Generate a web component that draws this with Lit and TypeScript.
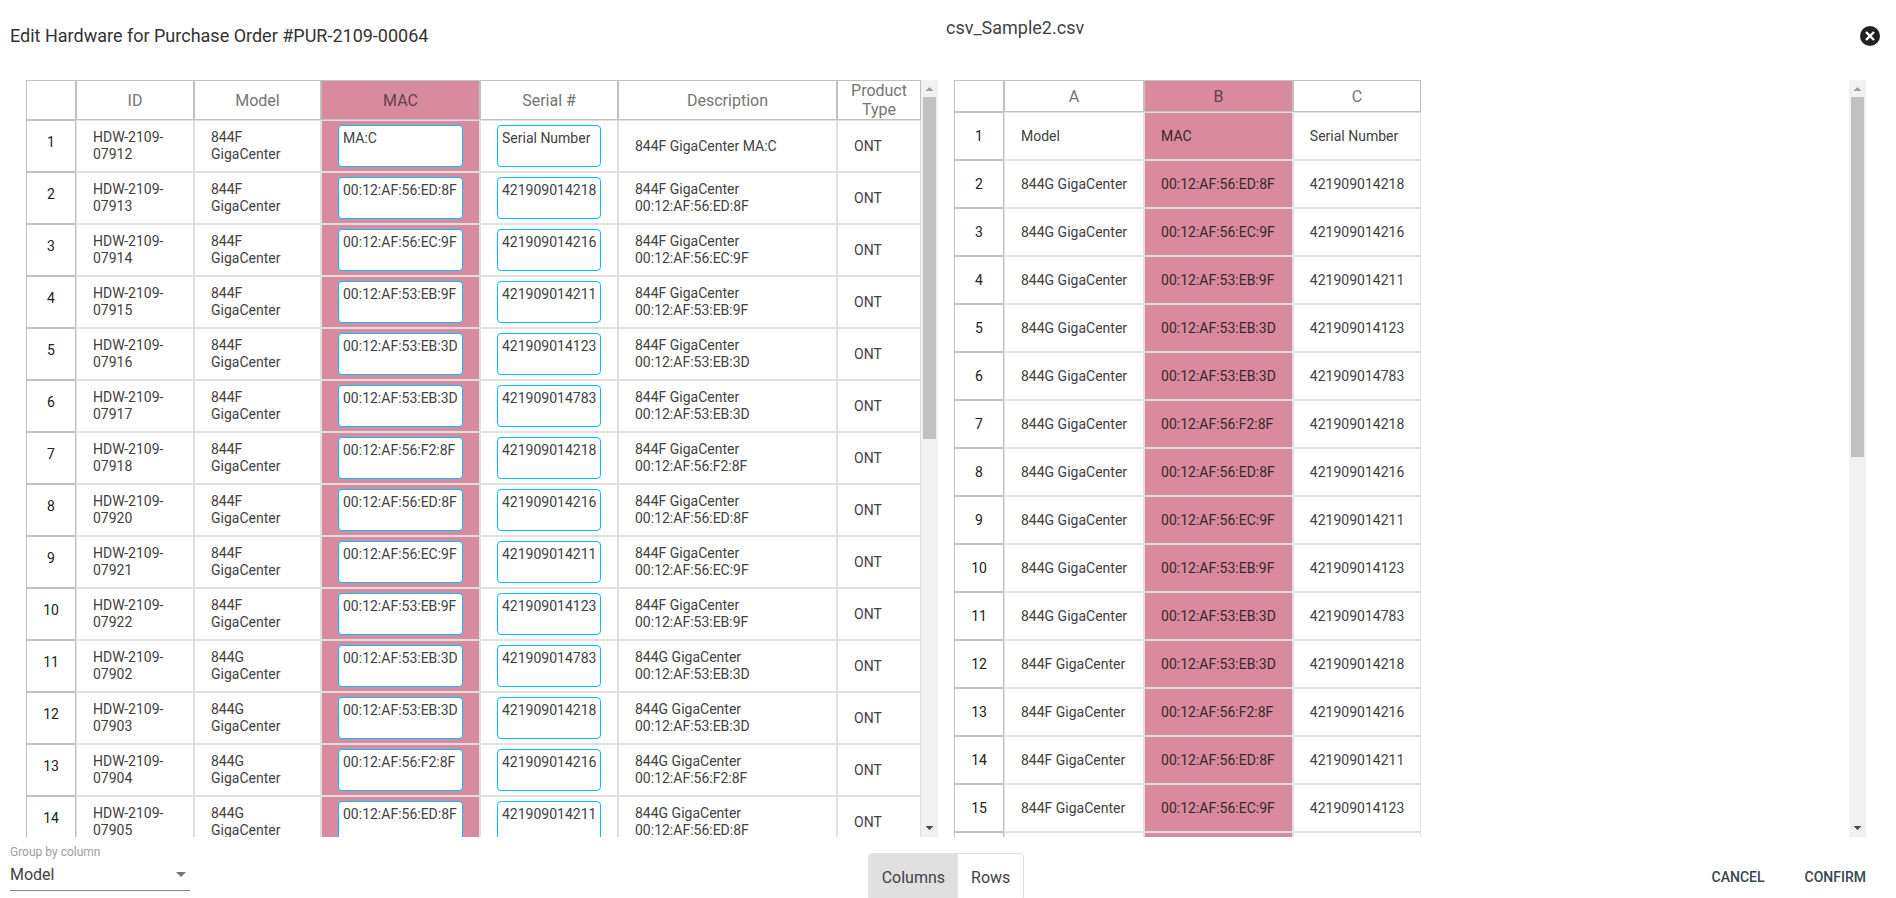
import { LitElement, html, css } from "lit";
import { customElement, property, state } from "lit/decorators.js";
import { classMap } from "lit/directives/class-map.js";

interface HardwareRow {
  id: string;
  model: string;
  mac: string;
  serial: string;
}

const HARDWARE: HardwareRow[] = [
  { id: "HDW-2109-07912", model: "844F GigaCenter", mac: "MA:C", serial: "Serial Number" },
  { id: "HDW-2109-07913", model: "844F GigaCenter", mac: "00:12:AF:56:ED:8F", serial: "421909014218" },
  { id: "HDW-2109-07914", model: "844F GigaCenter", mac: "00:12:AF:56:EC:9F", serial: "421909014216" },
  { id: "HDW-2109-07915", model: "844F GigaCenter", mac: "00:12:AF:53:EB:9F", serial: "421909014211" },
  { id: "HDW-2109-07916", model: "844F GigaCenter", mac: "00:12:AF:53:EB:3D", serial: "421909014123" },
  { id: "HDW-2109-07917", model: "844F GigaCenter", mac: "00:12:AF:53:EB:3D", serial: "421909014783" },
  { id: "HDW-2109-07918", model: "844F GigaCenter", mac: "00:12:AF:56:F2:8F", serial: "421909014218" },
  { id: "HDW-2109-07920", model: "844F GigaCenter", mac: "00:12:AF:56:ED:8F", serial: "421909014216" },
  { id: "HDW-2109-07921", model: "844F GigaCenter", mac: "00:12:AF:56:EC:9F", serial: "421909014211" },
  { id: "HDW-2109-07922", model: "844F GigaCenter", mac: "00:12:AF:53:EB:9F", serial: "421909014123" },
  { id: "HDW-2109-07902", model: "844G GigaCenter", mac: "00:12:AF:53:EB:3D", serial: "421909014783" },
  { id: "HDW-2109-07903", model: "844G GigaCenter", mac: "00:12:AF:53:EB:3D", serial: "421909014218" },
  { id: "HDW-2109-07904", model: "844G GigaCenter", mac: "00:12:AF:56:F2:8F", serial: "421909014216" },
  { id: "HDW-2109-07905", model: "844G GigaCenter", mac: "00:12:AF:56:ED:8F", serial: "421909014211" },
];

const CSV_ROWS: string[][] = [
  ["Model", "MAC", "Serial Number"],
  ["844G GigaCenter", "00:12:AF:56:ED:8F", "421909014218"],
  ["844G GigaCenter", "00:12:AF:56:EC:9F", "421909014216"],
  ["844G GigaCenter", "00:12:AF:53:EB:9F", "421909014211"],
  ["844G GigaCenter", "00:12:AF:53:EB:3D", "421909014123"],
  ["844G GigaCenter", "00:12:AF:53:EB:3D", "421909014783"],
  ["844G GigaCenter", "00:12:AF:56:F2:8F", "421909014218"],
  ["844G GigaCenter", "00:12:AF:56:ED:8F", "421909014216"],
  ["844G GigaCenter", "00:12:AF:56:EC:9F", "421909014211"],
  ["844G GigaCenter", "00:12:AF:53:EB:9F", "421909014123"],
  ["844G GigaCenter", "00:12:AF:53:EB:3D", "421909014783"],
  ["844F GigaCenter", "00:12:AF:53:EB:3D", "421909014218"],
  ["844F GigaCenter", "00:12:AF:56:F2:8F", "421909014216"],
  ["844F GigaCenter", "00:12:AF:56:ED:8F", "421909014211"],
  ["844F GigaCenter", "00:12:AF:56:EC:9F", "421909014123"],
  ["844F GigaCenter", "00:12:AF:53:EB:9F", "421909014783"],
];

const tableStyles = css`
  table {
    border-collapse: separate;
    border-spacing: 0;
    color: #424242;
    font-size: 14px;
    line-height: 17px;
  }
  th,
  td {
    box-sizing: border-box;
    border: 1px solid #e0e0e0;
    padding: 0 16px;
    text-align: left;
    font-weight: 400;
  }
  thead th {
    border-color: #c0c0c0;
    padding: 0;
    color: #757575;
    font-size: 16px;
    line-height: 19px;
    text-align: center;
  }
  .num {
    border-color: #c0c0c0;
    padding: 0;
    color: #212121;
    text-align: center;
  }
  .picked {
    background: #d88b9f;
  }
  thead .picked {
    color: #65414a;
  }
  td.picked {
    color: #3b262b;
  }
`;

/* A pane whose track and thumb are always shown beside the content. */
@customElement("scroll-pane")
export class ScrollPane extends LitElement {
  @property({ type: Number }) thumb = 50;

  static styles = css`
    :host {
      display: flex;
      min-width: 0;
      min-height: 0;
    }
    .content {
      flex: 1;
      min-width: 0;
      overflow: auto;
      scrollbar-width: none;
    }
    .bar {
      display: flex;
      flex-direction: column;
      width: 17px;
      background: #f1f1f1;
    }
    .arrow {
      display: block;
      flex: none;
      width: 17px;
      height: 17px;
    }
    .track {
      flex: 1;
      padding: 0 2px;
    }
    .thumb {
      background: #c1c1c1;
    }
  `;

  render() {
    return html`
      <div class="content"><slot></slot></div>
      <div class="bar" aria-hidden="true">
        <svg class="arrow" viewBox="0 0 17 17" shape-rendering="crispEdges">
          <path d="M8 7h1v1h1v1h1v1h1v1H5v-1h1V9h1V8h1z" fill="#a3a3a3" />
        </svg>
        <div class="track"><div class="thumb" style="height:${this.thumb}%"></div></div>
        <svg class="arrow" viewBox="0 0 17 17" shape-rendering="crispEdges">
          <path d="M5 6h7v1h-1v1h-1v1H9v1H8V9H7V8H6V7H5z" fill="#505050" />
        </svg>
      </div>
    `;
  }
}

@customElement("hardware-table")
export class HardwareTable extends LitElement {
  static styles = [
    tableStyles,
    css`
      :host {
        display: block;
      }
      table {
        width: 100%;
        table-layout: fixed;
      }
      thead tr {
        height: 40px;
      }
      tbody tr {
        height: 52px;
      }
      .c-num { width: 50px; }
      .c-id { width: 118px; }
      .c-model { width: 127px; }
      .c-mac { width: 159px; }
      .c-serial { width: 138px; }
      .c-type { width: 84px; }
      .num {
        padding-bottom: 8px;
      }
      textarea {
        box-sizing: border-box;
        display: block;
        width: 100%;
        height: 42px;
        margin: 0;
        padding: 4px;
        border: 1px solid #00bfff;
        border-radius: 4px;
        outline: none;
        background: #fff;
        color: #424242;
        font: inherit;
        resize: none;
        overflow: hidden;
        white-space: nowrap;
      }
    `,
  ];

  render() {
    return html`
      <table>
        <colgroup>
          <col class="c-num" /><col class="c-id" /><col class="c-model" /><col class="c-mac" />
          <col class="c-serial" /><col /><col class="c-type" />
        </colgroup>
        <thead>
          <tr>
            <th></th>
            <th scope="col">ID</th>
            <th scope="col">Model</th>
            <th scope="col" class="picked">MAC</th>
            <th scope="col">Serial #</th>
            <th scope="col">Description</th>
            <th scope="col">Product Type</th>
          </tr>
        </thead>
        <tbody>
          ${HARDWARE.map(
            (row, i) => html`
              <tr>
                <th scope="row" class="num">${i + 1}</th>
                <td>${row.id}</td>
                <td>${row.model}</td>
                <td class="picked">
                  <textarea aria-label="MAC, row ${i + 1}" spellcheck="false" .value=${row.mac}></textarea>
                </td>
                <td>
                  <textarea aria-label="Serial number, row ${i + 1}" spellcheck="false" .value=${row.serial}></textarea>
                </td>
                <td>${row.model} ${row.mac}</td>
                <td>ONT</td>
              </tr>
            `
          )}
        </tbody>
      </table>
    `;
  }
}

@customElement("csv-table")
export class CsvTable extends LitElement {
  static styles = [
    tableStyles,
    css`
      :host {
        display: block;
      }
      thead tr {
        height: 32px;
      }
      tbody tr {
        height: 48px;
      }
      .num {
        width: 50px;
      }
      td {
        white-space: nowrap;
      }
    `,
  ];

  render() {
    return html`
      <table>
        <thead>
          <tr>
            <th class="num"></th>
            ${["A", "B", "C"].map(
              (name, i) => html`<th scope="col" class=${classMap({ picked: i === 1 })}>${name}</th>`
            )}
          </tr>
        </thead>
        <tbody>
          ${CSV_ROWS.map(
            (row, r) => html`
              <tr>
                <th scope="row" class="num">${r + 1}</th>
                ${row.map((text, i) => html`<td class=${classMap({ picked: i === 1 })}>${text}</td>`)}
              </tr>
            `
          )}
        </tbody>
      </table>
    `;
  }
}

@customElement("app-root")
export class AppRoot extends LitElement {
  @state() private mode = "Columns";

  static styles = css`
    :host {
      display: flex;
      flex-direction: column;
      height: 100vh;
      overflow: hidden;
      background: #fff;
      color: #424242;
      font-family: Roboto, "Liberation Sans", sans-serif;
      font-size: 16px;
    }
    button,
    select {
      margin: 0;
      border: 0;
      background: none;
      color: inherit;
      font: inherit;
      cursor: pointer;
    }
    header {
      display: grid;
      grid-template-columns: 1fr 1fr;
      box-sizing: border-box;
      height: 80px;
      padding: 16px 14px 0 10px;
    }
    h1,
    h2 {
      margin: 0;
      font-size: 18px;
      font-weight: 400;
      line-height: 24px;
    }
    h1 {
      padding-top: 8px;
      color: #333;
    }
    .file {
      display: flex;
      justify-content: space-between;
      align-items: flex-start;
    }
    .close {
      display: block;
      padding: 8px 0 0;
    }
    .close svg {
      display: block;
      width: 24px;
      height: 24px;
    }
    main {
      flex: 1;
      display: grid;
      grid-template-columns: 1fr 1fr;
      grid-template-rows: minmax(0, 1fr);
      gap: 16px;
      min-height: 0;
      padding: 0 30px 0 26px;
    }
    footer {
      display: grid;
      grid-template-columns: 1fr auto 1fr;
      align-items: start;
      height: 61px;
      padding: 0 14px 0 10px;
    }
    .group {
      display: grid;
      width: 180px;
      padding-top: 7px;
      border-bottom: 1px solid #8c8c8c;
    }
    .group label {
      color: #9e9e9e;
      font-size: 12px;
      line-height: 16px;
    }
    .pick {
      display: grid;
      align-items: center;
    }
    .pick select,
    .pick svg {
      grid-area: 1 / 1;
    }
    .pick select {
      appearance: none;
      height: 30px;
      padding: 0 0 2px;
      outline: none;
    }
    .pick svg {
      justify-self: end;
      width: 10px;
      height: 5px;
      margin: 0 4px 2px 0;
      pointer-events: none;
    }
    .toggle {
      display: flex;
      margin-top: 16px;
      border: 1px solid #e0e0e0;
      border-radius: 4px;
      overflow: hidden;
    }
    .toggle button {
      height: 46px;
      padding: 0 13px;
    }
    .toggle .on {
      background: #e0e0e0;
    }
    .actions {
      display: flex;
      justify-content: flex-end;
      gap: 8px;
      padding-top: 22px;
    }
    .actions button {
      height: 36px;
      padding: 0 16px;
      color: #37474f;
      font-size: 14px;
      font-weight: 500;
    }
  `;

  render() {
    return html`
      <header>
        <h1>Edit Hardware for Purchase Order #PUR-2109-00064</h1>
        <div class="file">
          <h2>csv_Sample2.csv</h2>
          <button class="close" aria-label="Close">
            <svg viewBox="0 0 24 24">
              <circle cx="12" cy="12" r="10" fill="#212121" />
              <path d="M8 8l8 8M16 8l-8 8" stroke="#fff" stroke-width="2.4" />
            </svg>
          </button>
        </div>
      </header>
      <main>
        <scroll-pane .thumb=${47.3}><hardware-table></hardware-table></scroll-pane>
        <scroll-pane .thumb=${49.8}><csv-table></csv-table></scroll-pane>
      </main>
      <footer>
        <div class="group">
          <label for="group">Group by column</label>
          <div class="pick">
            <select id="group">
              <option>Model</option>
            </select>
            <svg viewBox="0 0 10 5"><path d="M0 0h10L5 5z" fill="#757575" /></svg>
          </div>
        </div>
        <div class="toggle" role="group" aria-label="Match by">
          ${["Columns", "Rows"].map(
            (name) => html`
              <button
                class=${classMap({ on: this.mode === name })}
                aria-pressed=${this.mode === name ? "true" : "false"}
                @click=${() => (this.mode = name)}
              >${name}</button>
            `
          )}
        </div>
        <div class="actions">
          <button>CANCEL</button>
          <button>CONFIRM</button>
        </div>
      </footer>
    `;
  }
}
